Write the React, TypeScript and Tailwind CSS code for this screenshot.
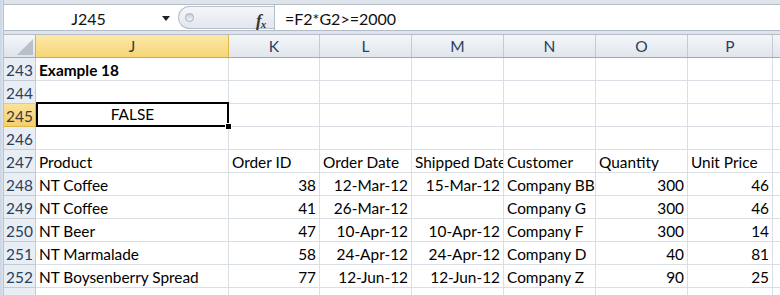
import React from "react";

const colW = ["w-[193px]", "w-[91px]", "w-[92px]", "w-[92px]", "w-[92px]", "w-[92px]", "w-[85px]"];
const letters = ["J", "K", "L", "M", "N", "O", "P"];

type C = { t?: string; r?: boolean; b?: boolean };

const rows: { n: number | null; cells: C[]; sel?: boolean }[] = [
  { n: 243, cells: [{ t: "Example 18", b: true }] },
  { n: 244, cells: [] },
  { n: 245, cells: [], sel: true },
  { n: 246, cells: [] },
  {
    n: 247,
    cells: [
      { t: "Product" },
      { t: "Order ID" },
      { t: "Order Date" },
      { t: "Shipped Date" },
      { t: "Customer" },
      { t: "Quantity" },
      { t: "Unit Price" },
    ],
  },
  {
    n: 248,
    cells: [
      { t: "NT Coffee" },
      { t: "38", r: true },
      { t: "12-Mar-12", r: true },
      { t: "15-Mar-12", r: true },
      { t: "Company BB" },
      { t: "300", r: true },
      { t: "46", r: true },
    ],
  },
  {
    n: 249,
    cells: [
      { t: "NT Coffee" },
      { t: "41", r: true },
      { t: "26-Mar-12", r: true },
      {},
      { t: "Company G" },
      { t: "300", r: true },
      { t: "46", r: true },
    ],
  },
  {
    n: 250,
    cells: [
      { t: "NT Beer" },
      { t: "47", r: true },
      { t: "10-Apr-12", r: true },
      { t: "10-Apr-12", r: true },
      { t: "Company F" },
      { t: "300", r: true },
      { t: "14", r: true },
    ],
  },
  {
    n: 251,
    cells: [
      { t: "NT Marmalade" },
      { t: "58", r: true },
      { t: "24-Apr-12", r: true },
      { t: "24-Apr-12", r: true },
      { t: "Company D" },
      { t: "40", r: true },
      { t: "81", r: true },
    ],
  },
  {
    n: 252,
    cells: [
      { t: "NT Boysenberry Spread" },
      { t: "77", r: true },
      { t: "12-Jun-12", r: true },
      { t: "12-Jun-12", r: true },
      { t: "Company Z" },
      { t: "90", r: true },
      { t: "25", r: true },
    ],
  },
  { n: null, cells: [] },
];

export default function App() {
  return (
    <div
      className="w-[780px] h-[295px] overflow-hidden flex bg-white text-black"
      style={{ fontFamily: "Lato, 'Open Sans', sans-serif" }}
    >
      {/* window frame strip */}
      <div className="w-[4px] shrink-0 bg-gradient-to-r from-[#c9d5e4] to-[#dce4ee] border-r border-[#b9c4d2]" />
      <div className="flex-1 flex flex-col min-w-0">
        {/* top band */}
        <div className="h-[5px] shrink-0 bg-[#dfe4eb] border-b border-[#b4bcc7]" />
        {/* formula bar */}
        <div className="h-[25px] shrink-0 flex items-stretch bg-white">
          <div className="w-[169px] shrink-0 flex items-center pt-[2px] relative">
            <span className="flex-1 text-center text-[16px] text-[#111]">J245</span>
            <span className="absolute right-[3px] top-[11px] w-0 h-0 border-l-[4px] border-r-[4px] border-t-[5px] border-l-transparent border-r-transparent border-t-[#222]" />
          </div>
          <div className="w-[96px] shrink-0 my-[1px] ml-[5px] rounded-l-full border border-r-0 border-[#b7bfca] bg-gradient-to-b from-[#f4f6f9] to-[#e2e7ee] relative">
            <span className="absolute left-[6px] top-[6px] w-[9px] h-[9px] rounded-full border border-[#a7b0bc] bg-gradient-to-b from-[#c9cfd7] to-[#f3f5f8]" />
            <span
              className="absolute left-[77px] top-[1px] text-[17px] italic font-bold text-[#333]"
              style={{ fontFamily: "'Liberation Serif', serif" }}
            >
              f<span className="text-[11px] relative top-[2px] -ml-[1px]">x</span>
            </span>
          </div>
          <div className="flex-1 border-l border-[#b7bfca] flex items-center pt-[2px] pl-[10px] text-[16px] text-[#111]">
            =F2*G2&gt;=2000
          </div>
        </div>
        {/* separator */}
        <div className="h-[5px] shrink-0 bg-[#dfe4eb] border-t border-b border-[#b4bcc7]" />
        {/* column header */}
        <div className="h-[23px] shrink-0 flex border-b border-[#9eabbd]">
          <div className="w-[32px] shrink-0 bg-gradient-to-b from-[#f4f6f9] to-[#dfe4eb] border-r border-[#a9b4c2] relative">
            <span
              className="absolute right-[2px] bottom-[2px] w-0 h-0"
              style={{ borderBottom: "16px solid #b9c0c9", borderLeft: "16px solid transparent" }}
            />
          </div>
          {letters.map((l, i) => (
            <div
              key={l}
              className={`${colW[i]} shrink-0 flex items-center justify-center pt-[1px] border-r text-[15.5px] ${
                i === 0
                  ? "bg-gradient-to-b from-[#fbe9a9] to-[#f6d575] border-[#e0b64a] text-[#3b3b3b]"
                  : "bg-gradient-to-b from-[#f4f6f9] to-[#e1e6ec] border-[#c3cad4] text-[#27405f]"
              }`}
            >
              {l}
            </div>
          ))}
          <div className="flex-1 bg-gradient-to-b from-[#f4f6f9] to-[#e1e6ec]" />
        </div>
        {/* rows */}
        {rows.map((row, ri) => (
          <div key={ri} className="h-[23px] shrink-0 flex">
            <div
              className={`w-[32px] shrink-0 flex items-center justify-center pt-[4px] text-[15.4px] border-r border-b ${
                row.sel
                  ? "bg-gradient-to-b from-[#fbe29a] to-[#f4cf6c] border-[#e0b64a] text-[#3b3b3b]"
                  : "bg-[#e9eef4] border-[#c3cad4] text-[#27405f]"
              }`}
            >
              {row.n}
            </div>
            {colW.map((w, i) => {
              const c = row.cells[i] || {};
              const isSel = row.sel && i === 0;
              return (
                <div
                  key={i}
                  className={`${w} shrink-0 flex items-center pt-[4px] text-[15.4px] border-r border-b border-[#dadfe6] whitespace-nowrap relative ${
                    isSel ? "z-10" : "overflow-hidden"
                  } ${c.r ? "justify-end pr-[3px]" : "justify-start pl-[3px]"} ${c.b ? "font-bold" : ""}`}
                >
                  {c.t}
                  {isSel && (
                    <div className="absolute left-0 -top-[2px] -right-[1px] -bottom-[1px] border-2 border-black flex items-center justify-center pt-[1px]">
                      FALSE
                      <span className="absolute -right-[5px] -bottom-[5px] w-[7px] h-[7px] bg-black border border-white" />
                    </div>
                  )}
                </div>
              );
            })}
            <div className="flex-1 border-b border-[#dadfe6]" />
          </div>
        ))}
      </div>
    </div>
  );
}
